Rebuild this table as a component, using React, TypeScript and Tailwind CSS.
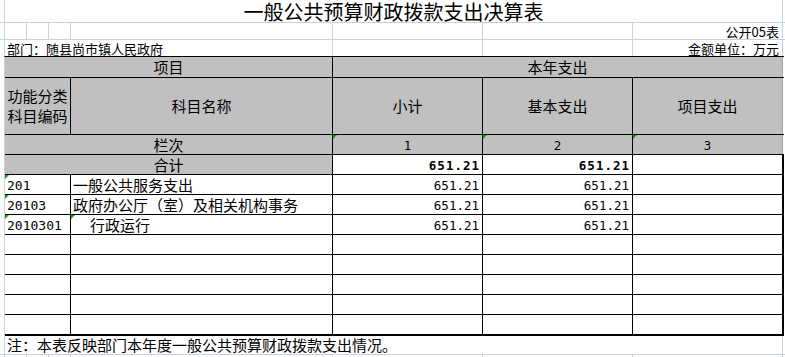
import React from "react";

const cjk = "font-['Noto_Sans_CJK_SC',sans-serif]";
const mono = "font-['DejaVu_Sans_Mono',monospace]";
const grid = "border-[#c8d0e4]";
const head = "bg-[#c0c0c0]";

type Row = { code: string; name: string; total: string; basic: string; indent?: boolean; flagName?: boolean };

const rows: Row[] = [
  { code: "201", name: "一般公共服务支出", total: "651.21", basic: "651.21" },
  { code: "20103", name: "政府办公厅（室）及相关机构事务", total: "651.21", basic: "651.21" },
  { code: "2010301", name: "行政运行", total: "651.21", basic: "651.21", indent: true, flagName: true },
];

const blanks = 5;

function Flag() {
  return (
    <span className="absolute left-0 top-0 h-0 w-0 border-r-[4px] border-t-[4px] border-r-transparent border-t-[#1a9a1a]" />
  );
}

function GridCells({ h }: { h: string }) {
  // spreadsheet gridlines for rows outside the table
  return (
    <div className={`flex ${h} border-b ${grid}`}>
      <div className={`w-[5px] shrink-0 border-r ${grid}`} />
      <div className={`w-[22px] shrink-0 border-r ${grid}`} />
      <div className={`w-[22px] shrink-0 border-r ${grid}`} />
      <div className={`w-[22px] shrink-0 border-r ${grid}`} />
      <div className={`w-[262px] shrink-0 border-r ${grid}`} />
      <div className={`w-[150px] shrink-0 border-r ${grid}`} />
      <div className={`w-[150px] shrink-0 border-r ${grid}`} />
      <div className={`w-[150px] shrink-0 border-r ${grid}`} />
    </div>
  );
}

export default function App() {
  const empty = Array.from({ length: blanks }, (_, i) => i);

  return (
    <div className={`h-[357px] w-[785px] overflow-hidden bg-white text-black ${cjk}`}>
      {/* title */}
      <div className={`flex h-[23px] border-b ${grid}`}>
        <div className={`w-[5px] shrink-0 border-r ${grid}`} />
        <div className={`flex w-[778px] shrink-0 items-center justify-center border-r ${grid} pt-[1px] text-[20px] leading-[20px]`}>
          一般公共预算财政拨款支出决算表
        </div>
      </div>

      <div className={`flex h-[17px] border-b ${grid}`}>
        <div className={`w-[5px] shrink-0 border-r ${grid}`} />
        <div className={`w-[22px] shrink-0 border-r ${grid}`} />
        <div className={`w-[22px] shrink-0 border-r ${grid}`} />
        <div className={`w-[22px] shrink-0 border-r ${grid}`} />
        <div className={`w-[262px] shrink-0 border-r ${grid}`} />
        <div className={`w-[150px] shrink-0 border-r ${grid}`} />
        <div className={`w-[150px] shrink-0 border-r ${grid}`} />
        <div className={`flex w-[150px] shrink-0 items-center justify-end border-r ${grid} pr-[3px] pt-[2px] text-[13px] leading-[14px]`}>
          公开05表
        </div>
      </div>

      <div className="flex h-[16px]">
        <div className={`w-[5px] shrink-0 border-r ${grid}`} />
        <div className={`flex w-[328px] shrink-0 items-end border-r ${grid} pl-[2px] text-[13px] leading-[14px]`}>
          部门：随县尚市镇人民政府
        </div>
        <div className={`w-[150px] shrink-0 border-r ${grid}`} />
        <div className={`w-[150px] shrink-0 border-r ${grid}`} />
        <div className={`flex w-[150px] shrink-0 items-end justify-end border-r ${grid} pr-[3px] text-[13px] leading-[14px]`}>
          金额单位：万元
        </div>
      </div>

      {/* table */}
      <div className="flex">
        <div className="w-[4px] shrink-0" />
        <div className="border-l border-t border-l-[#c8d0e4] border-t-black text-[15px]">
          <div className="flex h-[21px] border-b border-black">
            <div className={`flex w-[328px] items-center justify-center border-r border-black ${head} leading-[20px]`}>项目</div>
            <div className={`flex w-[450px] items-center justify-center border-r border-[#a0a0a0] ${head} leading-[20px]`}>本年支出</div>
          </div>

          <div className="flex h-[57px] border-b border-black">
            <div className={`flex w-[66px] items-center justify-center border-r border-black ${head} text-center leading-[20px]`}>
              功能分类
              <br />
              科目编码
            </div>
            <div className={`flex w-[262px] items-center justify-center border-r border-black ${head}`}>科目名称</div>
            <div className={`flex w-[150px] items-center justify-center border-r border-black ${head}`}>小计</div>
            <div className={`flex w-[150px] items-center justify-center border-r border-black ${head}`}>基本支出</div>
            <div className={`flex w-[150px] items-center justify-center border-r border-[#a0a0a0] ${head}`}>项目支出</div>
          </div>

          <div className="flex h-[20px] border-b border-black">
            <div className={`flex w-[328px] items-center justify-center border-r border-black ${head} leading-[19px]`}>栏次</div>
            {["1", "2", "3"].map((n, i) => (
              <div
                key={n}
                className={`relative flex w-[150px] items-center justify-center border-r ${i === 2 ? "border-[#a0a0a0]" : "border-black"} ${head} ${mono} pt-[2px] text-[12.5px] leading-[17px]`}
              >
                <Flag />
                {n}
              </div>
            ))}
          </div>

          <div className="flex h-[20px] border-b border-black">
            <div className={`flex w-[328px] items-center justify-center border-r border-black ${head} leading-[19px]`}>合计</div>
            <div className={`flex w-[150px] items-center justify-end border-r border-black pr-[2px] pt-[2px] ${mono} text-[12.5px] font-bold leading-[17px] tracking-[1px]`}>
              651.21
            </div>
            <div className={`flex w-[150px] items-center justify-end border-r border-black pr-[2px] pt-[2px] ${mono} text-[12.5px] font-bold leading-[17px] tracking-[1px]`}>
              651.21
            </div>
            <div className="w-[151px] border-r-2 border-black" />
          </div>

          {rows.map((r) => (
            <div key={r.code} className="flex h-[20px] border-b border-black">
              <div className={`relative flex w-[66px] items-center border-r border-black pl-[2px] pt-[2px] ${mono} text-[13px] leading-[17px]`}>
                <Flag />
                {r.code}
              </div>
              <div
                className={`relative flex w-[262px] items-center border-r border-black ${r.indent ? "pl-[19px]" : "pl-[2px]"} pt-[1px] leading-[18px]`}
              >
                {r.flagName && <Flag />}
                {r.name}
              </div>
              <div className={`flex w-[150px] items-center justify-end border-r border-black pr-[3px] pt-[2px] ${mono} text-[12.5px] leading-[17px]`}>
                {r.total}
              </div>
              <div className={`flex w-[150px] items-center justify-end border-r border-black pr-[3px] pt-[2px] ${mono} text-[12.5px] leading-[17px]`}>
                {r.basic}
              </div>
              <div className="w-[151px] border-r-2 border-black" />
            </div>
          ))}

          {empty.map((i) => (
            <div key={i} className={`flex ${i === blanks - 1 ? "h-[21px] border-b-2" : "h-[20px] border-b"} border-black`}>
              <div className="w-[66px] border-r border-black" />
              <div className="w-[262px] border-r border-black" />
              <div className="w-[150px] border-r border-black" />
              <div className="w-[150px] border-r border-black" />
              <div className="w-[151px] border-r-2 border-black" />
            </div>
          ))}
        </div>
      </div>

      {/* note */}
      <div className={`flex h-[19px] border-b ${grid}`}>
        <div className={`w-[5px] shrink-0 border-r ${grid}`} />
        <div className={`flex w-[778px] shrink-0 items-center border-r ${grid} pl-[2px] text-[15px] leading-[18px]`}>
          注：本表反映部门本年度一般公共预算财政拨款支出情况。
        </div>
      </div>
      <GridCells h="h-[10px]" />
    </div>
  );
}
